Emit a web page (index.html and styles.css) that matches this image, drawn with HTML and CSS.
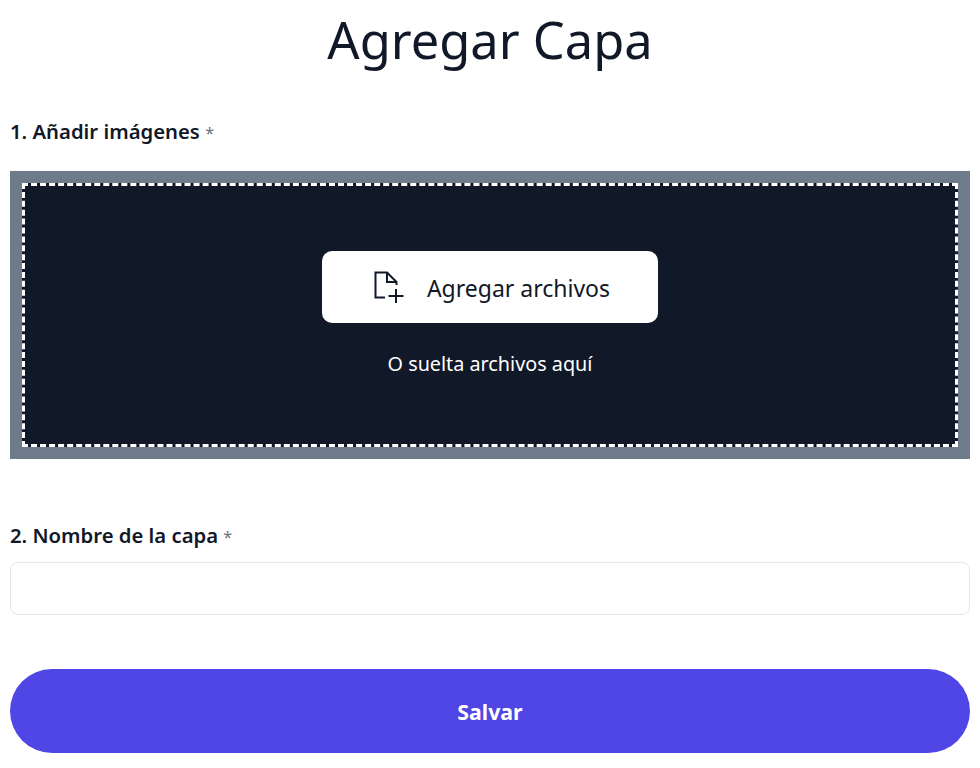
FILE: index.html
```html
<!DOCTYPE html>
<html lang="es">
<head>
  <meta charset="UTF-8" />
  <meta name="viewport" content="width=device-width, initial-scale=1" />
  <title>Agregar Capa</title>
  <link rel="stylesheet" href="styles.css">
</head>
<body>
  <div class="container">
    <h1>Agregar Capa</h1>
    <form id="add-layer-form">
      <div class="form-group">
        <label class="field-label">1. Añadir imágenes <span class="required">*</span></label>
        <div class="dropzone">
          <div class="dropzone-inner">
            <button type="button" class="add-files">
              <svg class="add-files-icon" width="32" height="32" viewBox="0 0 32 32" fill="none" stroke="#111827" stroke-width="2">
                <path d="M12 26.5H2.5V1.5H14L23.5 11V14"/>
                <path d="M14 1.5V11H23.5"/>
                <path d="M23 18V32M15.5 25H30.5"/>
              </svg>
              <span class="add-files-text">Agregar archivos</span>
            </button>
            <p class="drop-text">O suelta archivos aquí</p>
          </div>
        </div>
      </div>

      <div class="form-group">
        <label class="field-label" for="layerName">2. Nombre de la capa <span class="required">*</span></label>
        <input type="text" id="layerName" name="layerName" required />
      </div>

      <button type="submit" class="save-button">Salvar</button>
    </form>
  </div>
</body>
</html>
```

FILE: styles.css
```css
* {
  margin: 0;
  padding: 0;
  box-sizing: border-box;
}

body {
  font-family: "Noto Sans", "Open Sans", sans-serif;
  background: #ffffff;
  color: #111827;
}

.container {
  padding: 0 10px;
}

h1 {
  font-size: 50.6px;
  font-weight: 400;
  line-height: 80px;
  text-align: center;
  margin-bottom: 37px;
}

.form-group {
  display: flex;
  flex-direction: column;
}

.field-label {
  font-size: 20.3px;
  font-weight: 600;
  line-height: 28px;
  margin-bottom: 24px;
}

.form-group + .form-group .field-label {
  margin-bottom: 12px;
}

.required {
  font-size: 16px;
  font-weight: 400;
  color: #6b7280;
}

.dropzone {
  background: #6f7a8b;
  padding: 12px;
  height: 288px;
  margin-bottom: 62px;
}

.dropzone-inner {
  height: 100%;
  background: #111827;
  border: 3px dashed #ffffff;
  display: flex;
  flex-direction: column;
  align-items: center;
  padding-top: 65px;
}

.add-files {
  display: flex;
  align-items: center;
  justify-content: center;
  gap: 22px;
  width: 336px;
  height: 72px;
  padding-left: 3px;
  background: #ffffff;
  border: none;
  border-radius: 10px;
  color: #111827;
  font-family: inherit;
  font-size: 23px;
}

.add-files-icon {
  flex: none;
}

.add-files-text {
  padding-top: 2px;
}

.drop-text {
  color: #ffffff;
  font-size: 19.8px;
  line-height: 28px;
  margin-top: 27px;
}

input[type='text'] {
  width: 100%;
  height: 53px;
  border: 1px solid #e5e7eb;
  border-radius: 8px;
  background: #ffffff;
  font-size: 16px;
  margin-top: -1px;
  margin-bottom: 54px;
}

.save-button {
  display: block;
  width: 100%;
  height: 84px;
  border: none;
  border-radius: 42px;
  background: #4f46e5;
  color: #ffffff;
  font-family: inherit;
  font-size: 21.3px;
  font-weight: 700;
}
```
